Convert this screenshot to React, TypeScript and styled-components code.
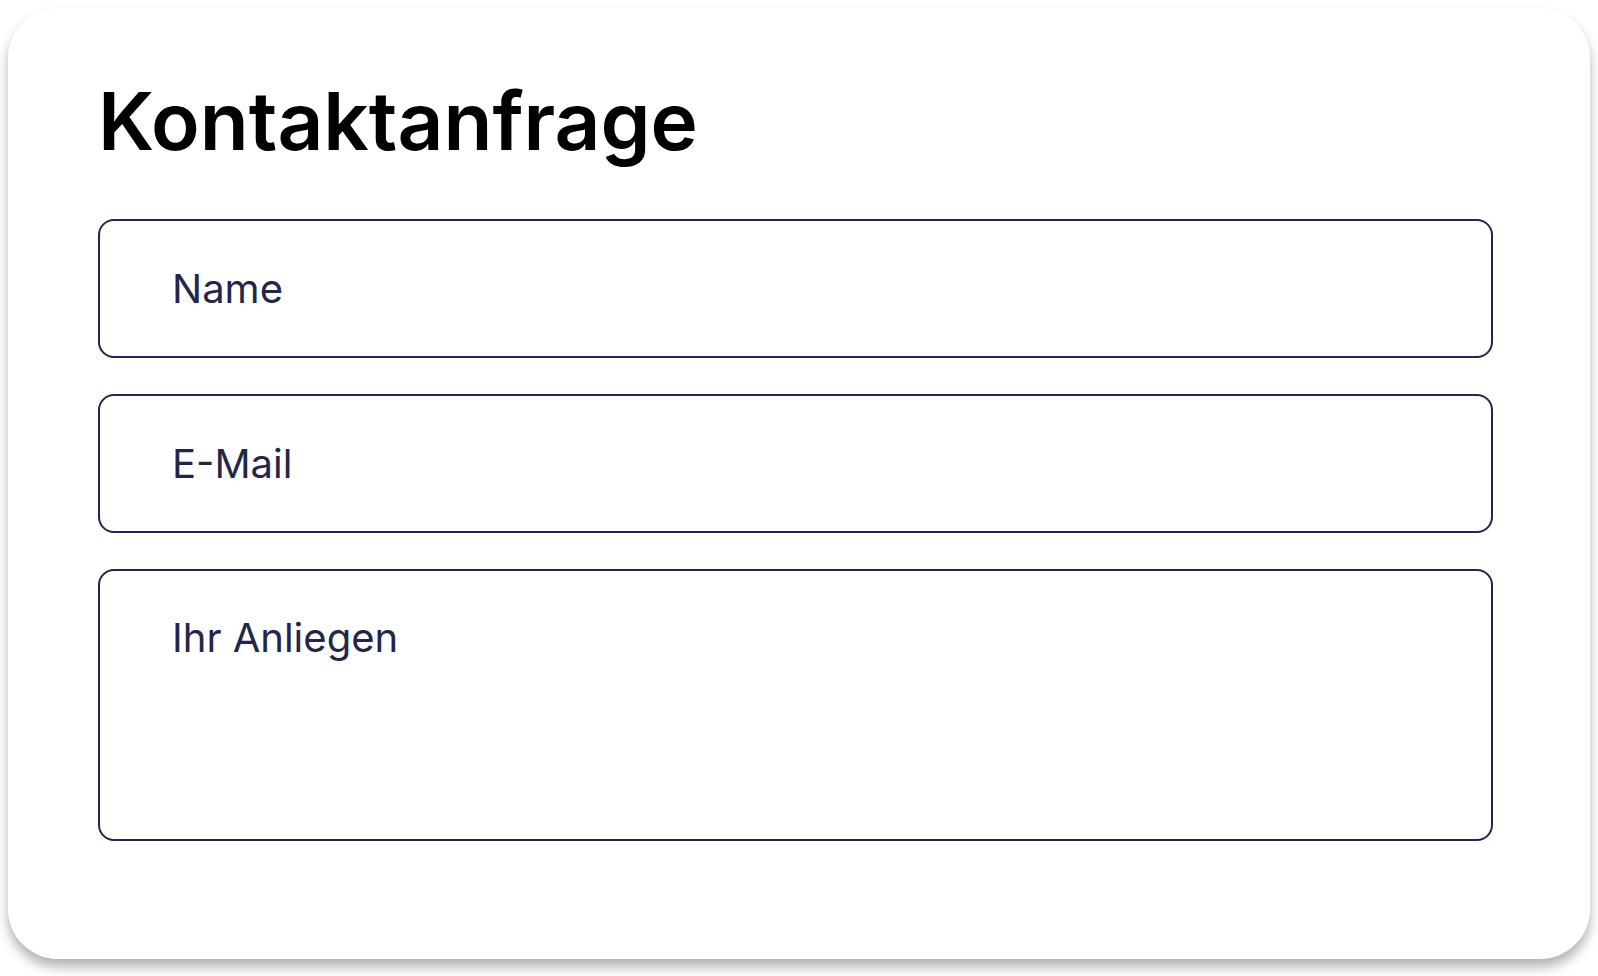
import styled, { createGlobalStyle } from "styled-components";

const GlobalStyle = createGlobalStyle`
    body {
        margin: 0;
        background: #ffffff;
        font-family: Inter, "Noto Sans", sans-serif;
    }
`

const fields = [
    { name: "name", label: "Name", type: "text" },
    { name: "email", label: "E-Mail", type: "email" },
]

export default function App() {
    return (
        <Page>
            <GlobalStyle/>
            <Card>
                <Title>Kontaktanfrage</Title>
                <Form>
                    {fields.map(f => (
                        <Field key={f.name} name={f.name} type={f.type} placeholder={f.label}/>
                    ))}
                    <Message name="message" placeholder="Ihr Anliegen"/>
                </Form>
            </Card>
        </Page>
    );
}

const Page = styled.main`
    box-sizing: border-box;
    min-height: 976px;
    padding: 8px 8px 17px;
    background: #ffffff;
`

const Card = styled.section`
    box-sizing: border-box;
    height: 951px;
    padding: 64px 97px 0 90px;
    background: #ffffff;
    border-radius: 50px;
    box-shadow: 0 8px 12px rgba(0, 0, 0, 0.3);
    display: flex;
    flex-direction: column;
`

const Title = styled.h1`
    margin: 0 0 50px;
    font-family: Inter, sans-serif;
    font-weight: 600;
    font-size: 80px;
    line-height: normal;
    color: #000000;
`

const Form = styled.form`
    display: flex;
    flex-direction: column;
    gap: 36px;
`

const inputBase = `
    box-sizing: border-box;
    width: 100%;
    margin: 0;
    border: 2px solid #23264a;
    border-radius: 16px;
    background: #ffffff;
    padding: 0 72px;
    font-family: Inter, sans-serif;
    font-size: 40px;
    line-height: normal;
    color: #23264a;
    outline: none;

    &::placeholder {
        color: #23264a;
        opacity: 1;
    }
`

const Field = styled.input`
    ${inputBase}
    height: 139px;
`

const Message = styled.textarea`
    ${inputBase}
    height: 272px;
    padding-top: 42px;
    resize: none;
`
